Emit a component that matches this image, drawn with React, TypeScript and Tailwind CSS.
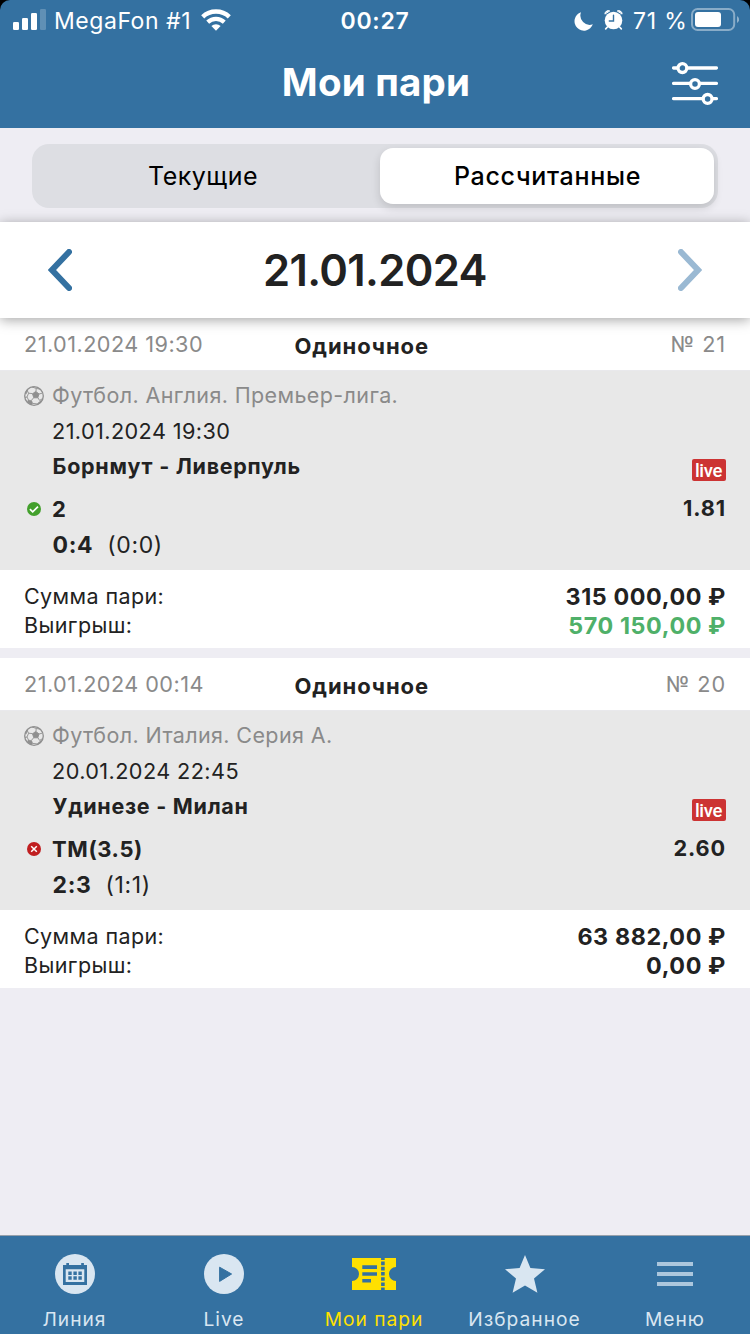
import type { ReactNode } from "react";

type Bet = {
  placed: string;
  number: string;
  league: string;
  start: string;
  match: string;
  won: boolean;
  pick: string;
  odds: string;
  score: string;
  half: string;
  stake: string;
  payout: string;
};

const bets: Bet[] = [
  {
    placed: "21.01.2024 19:30",
    number: "№ 21",
    league: "Футбол. Англия. Премьер-лига.",
    start: "21.01.2024 19:30",
    match: "Борнмут - Ливерпуль",
    won: true,
    pick: "2",
    odds: "1.81",
    score: "0:4",
    half: "(0:0)",
    stake: "315 000,00 ₽",
    payout: "570 150,00 ₽",
  },
  {
    placed: "21.01.2024 00:14",
    number: "№ 20",
    league: "Футбол. Италия. Серия А.",
    start: "20.01.2024 22:45",
    match: "Удинезе - Милан",
    won: false,
    pick: "ТМ(3.5)",
    odds: "2.60",
    score: "2:3",
    half: "(1:1)",
    stake: "63 882,00 ₽",
    payout: "0,00 ₽",
  },
];

function SignalIcon() {
  return (
    <svg width="33" height="21" viewBox="0 0 33 21" fill="#fff">
      <rect x="0" y="13" width="6" height="8" rx="1.3" />
      <rect x="9" y="9" width="6" height="12" rx="1.3" />
      <rect x="18" y="4" width="6" height="17" rx="1.3" />
      <rect x="27" y="0" width="6" height="21" rx="1.3" opacity="0.22" />
    </svg>
  );
}

function WifiIcon() {
  return (
    <svg width="30" height="22" viewBox="-15 -22 30 22" fill="none" stroke="#fff">
      <path d="M-13.3 -14.2A19.5 19.5 0 0 1 13.3 -14.2" strokeWidth="4.5" />
      <path d="M-8.3 -8.9A12.2 12.2 0 0 1 8.3 -8.9" strokeWidth="4.2" />
      <path d="M0 -0.3L-4.6 -4.9A6.6 6.6 0 0 1 4.6 -4.9Z" fill="#fff" stroke="none" />
    </svg>
  );
}

function MoonIcon() {
  return (
    <svg width="19" height="19" viewBox="0 0 19 19" fill="#fff">
      <path d="M7 .3A9.4 9.4 0 1 0 18.8 12.3A9.3 9.3 0 0 1 7 .3Z" />
    </svg>
  );
}

function AlarmIcon() {
  return (
    <svg width="19" height="20" viewBox="0 0 19 20" fill="none" strokeLinecap="round">
      <circle cx="9.5" cy="10.5" r="8.8" fill="#fff" />
      <path d="M.9 3.7A3.2 3.2 0 0 1 5.4 .8ZM18.1 3.7A3.2 3.2 0 0 0 13.6 .8Z" fill="#fff" stroke="#fff" strokeWidth="1" strokeLinejoin="round" />
      <path d="M3.4 17L1.7 18.9M15.6 17L17.3 18.9" stroke="#fff" strokeWidth="1.6" />
      <path d="M9.5 5.3V11H5.3" stroke="#3471a1" strokeWidth="1.4" />
    </svg>
  );
}

function BatteryIcon() {
  return (
    <svg width="48" height="23" viewBox="0 0 48 23" fill="none">
      <rect x="1" y="1" width="42.2" height="21" rx="5.6" stroke="#fff" strokeOpacity="0.42" strokeWidth="2" />
      <rect x="4" y="4" width="26" height="15" rx="3" fill="#fff" />
      <path d="M46 8A4 4 0 0 1 46 15Z" fill="#fff" fillOpacity="0.45" />
    </svg>
  );
}

function FilterIcon() {
  return (
    <svg width="46" height="43" viewBox="0 0 46 43" fill="#3471a1" stroke="#fff" strokeWidth="3.3" strokeLinecap="round">
      <path d="M1.6 6H44.4M1.6 21.4H44.4M1.6 36.7H44.4" />
      <circle cx="10.4" cy="6.1" r="4.4" />
      <circle cx="23" cy="22" r="4.4" />
      <circle cx="35.6" cy="36.9" r="4.4" />
    </svg>
  );
}

function Chevron({ right = false }: { right?: boolean }) {
  return (
    <svg
      width="24"
      height="42"
      viewBox="0 0 24 42"
      fill="none"
      strokeWidth="6"
      strokeLinecap="round"
      strokeLinejoin="miter"
      className={right ? "stroke-[#9ab9d3]" : "stroke-[#3471a1]"}
    >
      <path d={right ? "M3 3L20 21L3 39" : "M21 3L4 21L21 39"} />
    </svg>
  );
}

function BallIcon() {
  return (
    <svg width="20" height="20" viewBox="0 0 20 20" fill="none" stroke="#8f8f8f" strokeWidth="0.9" strokeLinejoin="round">
      <circle cx="10" cy="10" r="9.3" strokeWidth="1.3" />
      <path d="M11.8 5.4L15 7.9L13.8 11.8H9.8L8.5 7.8Z" fill="#8f8f8f" />
      <path d="M12 5.4L12.2 2.4L8 1M12.2 2.4L16.2 3.2M15 8L18.2 7.2M13.8 11.6L15.6 14.4L18.6 12.6M9.8 11.6L7.4 14.4M8.8 17.4L14 18M8.6 7.6L4.6 7.2L3 4.2M4.6 7.2L3 11L.9 11.5M3 11L4.6 14.2" />
      <path d="M4.2 14L7.6 14.6L8.8 17.6L7.2 18.8L3.4 16.2ZM14 17L17 14.6L17.4 15.6L13.6 18.6ZM1.2 7.6L2.8 4.4L3.8 4L2.2 8Z" fill="#8f8f8f" strokeWidth=".5" />
    </svg>
  );
}

function ResultIcon({ won }: { won: boolean }) {
  return (
    <svg width="14" height="14" viewBox="0 0 14 14" fill="none" stroke="#fff" strokeWidth={won ? "1.7" : "1.5"}>
      <circle cx="7" cy="7" r="7" fill={won ? "#43a02c" : "#c01e20"} stroke="none" />
      <path d={won ? "M2.9 7.2L5.7 9.9L11 4.6" : "M4.2 4.2L9.8 9.8M9.8 4.2L4.2 9.8"} />
    </svg>
  );
}

function LineIcon() {
  return (
    <svg width="40" height="40" viewBox="0 0 40 40" fill="#3471a1">
      <circle cx="20" cy="20" r="20" fill="#d9e6f1" />
      <path fillRule="evenodd" d="M8 11H11.3V9H14V11H26.2V9H28.9V11H32V31H8ZM10.7 15.3V28H29.3V15.3Z" />
      <path d="M13.3 17.5H16.7V21H13.3ZM18.4 17.5H21.8V21H18.4ZM23.4 17.5H26.8V21H23.4ZM13.3 22.3H16.7V25.8H13.3ZM18.4 22.3H21.8V25.8H18.4ZM23.4 22.3H26.8V25.8H23.4Z" />
    </svg>
  );
}

function PlayIcon() {
  return (
    <svg width="40" height="40" viewBox="0 0 40 40">
      <circle cx="20" cy="20" r="20" fill="#d9e6f1" />
      <path d="M15.6 13.2L27.6 20L15.6 27.4Z" fill="#3471a1" stroke="#3471a1" strokeWidth="1" strokeLinejoin="round" />
    </svg>
  );
}

function TicketIcon() {
  return (
    <svg width="44" height="32" viewBox="0 0 44 32" fill="#ffe000">
      <path d="M0 0H44V9A7 7 0 0 0 44 23V32H0V23A7 7 0 0 0 0 9Z" />
      <path d="M10.3 7.3H25V11H10.3ZM10.3 14.2H25V17.8H10.3ZM10.3 21H19V24.6H10.3Z" fill="#3471a1" />
      <path d="M30.9 0V32" stroke="#3471a1" strokeWidth="3.6" strokeDasharray="3.6 1.6" strokeDashoffset="1.6" />
    </svg>
  );
}

function StarIcon() {
  return (
    <svg width="40" height="38" viewBox="0 0 40 38" fill="#d9e6f1">
      <path d="M20 0L25.4 12.9L40 14.2L29 23.6L32.4 37.8L20 30.6L7.6 37.8L11 23.6L0 14.2L14.6 12.9Z" />
    </svg>
  );
}

function MenuIcon() {
  return (
    <svg width="36" height="24" viewBox="0 0 36 24" fill="#acc7dd">
      <path d="M0 0H36V4H0ZM0 10H36V14H0ZM0 20H36V24H0Z" />
    </svg>
  );
}

function BetCard({ bet }: { bet: Bet }) {
  return (
    <article className="bg-white text-[#222]">
      <header className="flex h-[52px] items-center px-6 text-[21.7px] text-[#8a8a8a]">
        <span className="w-[270.5px] tracking-[0.44px]">{bet.placed}</span>
        <span className="pt-1 text-[22px] font-bold tracking-[0.92px] text-[#222]">Одиночное</span>
        <span className="ml-auto tracking-[0.9px]">{bet.number}</span>
      </header>

      <div className="h-[200px] border-t border-[#e9e9ec] bg-[#e8e8e8] px-6 pt-[7px]">
        <div className="flex h-9 items-center text-[21.5px] tracking-[0.38px] text-[#8a8a8a]">
          <span className="w-7"><BallIcon /></span>
          <span className="pb-0.5">{bet.league}</span>
        </div>
        <div className="flex h-[35px] items-center pl-7 text-[21.7px] tracking-[0.4px]">{bet.start}</div>
        <div className="mb-[7px] flex h-[35px] items-center justify-between pl-[28.5px]">
          <span className="text-[21.5px] font-bold tracking-[0.72px]">{bet.match}</span>
          <span className="mt-[7px] flex h-[22px] w-[34px] items-center justify-center rounded-[2px] bg-[#cc3333] pt-[3px] pr-px font-[Roboto,sans-serif] text-[18.5px] font-medium tracking-[-0.3px] text-white">
            live
          </span>
        </div>
        <div className="flex h-9 items-center text-[22px] font-bold">
          <span className="w-7 pl-[3px]"><ResultIcon won={bet.won} /></span>
          <span className="flex-1 tracking-[0.6px]">{bet.pick}</span>
          <span className="pb-0.5 text-[21.7px] tracking-[0.9px]">{bet.odds}</span>
        </div>
        <div className="flex h-9 items-center gap-[14px] pl-[28.5px] text-[23px]">
          <span className="font-bold tracking-[0.65px]">{bet.score}</span>
          <span className="tracking-[0.65px]">{bet.half}</span>
        </div>
      </div>

      <footer className="h-[78px] px-6 pt-3">
        <div className="flex h-[29px] items-center justify-between text-[21.5px] tracking-[0.4px]">
          <span>Сумма пари:</span>
          <span className="pt-0.5 text-[23.3px] font-bold tracking-[0.6px]">{bet.stake}</span>
        </div>
        <div className="flex h-[29px] items-center justify-between text-[21.5px] tracking-[0.4px]">
          <span>Выигрыш:</span>
          <span className={`pt-0.5 text-[23.3px] font-bold tracking-[0.6px] ${bet.won ? "text-[#4fb069]" : ""}`}>{bet.payout}</span>
        </div>
      </footer>
    </article>
  );
}

function NavItem({ icon, label, active = false }: { icon: ReactNode; label: string; active?: boolean }) {
  return (
    <a className={`flex flex-col items-center ${active ? "text-[#ffe000]" : "text-[#d9e6f1]"}`}>
      <span className="flex h-[76px] items-center">{icon}</span>
      <span className="-mt-[3px] h-5 text-[19.2px] leading-5 tracking-[1px]">{label}</span>
    </a>
  );
}

export default function App() {
  return (
    <div className="flex h-[1334px] w-[750px] flex-col overflow-hidden bg-black font-[Inter,sans-serif] whitespace-nowrap">
      <header className="h-32 shrink-0 rounded-t-[10px] bg-[#3471a1] text-white">
        <div className="grid h-[41px] grid-cols-[1fr_auto_1fr] items-center text-[23px]">
          <div className="flex items-center pl-[13px]">
            <span className="-mt-0.5"><SignalIcon /></span>
            <span className="ml-2 w-[147px] pt-0.5 tracking-[0.55px]">MegaFon #1</span>
            <span className="-mt-px"><WifiIcon /></span>
          </div>
          <span className="pt-0.5 font-semibold tracking-[0.7px]">00:27</span>
          <div className="flex items-center justify-end pr-[11px]">
            <span className="mt-px"><MoonIcon /></span>
            <span className="ml-[11px] -mt-px"><AlarmIcon /></span>
            <span className="mr-0.5 ml-[10px] w-[56px] pt-0.5 tracking-[0.8px]">71 %</span>
            <span className="-mt-0.5"><BatteryIcon /></span>
          </div>
        </div>
        <div className="grid h-[82px] grid-cols-[1fr_auto_1fr] items-center">
          <h1 className="col-start-2 pt-0.5 pl-0.5 text-[38.5px] font-bold tracking-[0.2px]">Мои пари</h1>
          <span className="justify-self-end pt-[3px] pr-8"><FilterIcon /></span>
        </div>
      </header>

      <main className="flex-1 bg-[#eeedf3]">
        <div className="h-[94px] px-8 pt-4">
          <div className="grid h-16 grid-cols-2 gap-[10px] rounded-[17px] bg-[#dddee3] p-1 text-[25px] text-black">
            <button className="pt-0.5 tracking-[0.48px]">Текущие</button>
            <button className="rounded-[13px] bg-white pt-0.5 pl-px font-medium tracking-[0.7px] shadow-[0_4px_10px_rgba(0,0,0,0.14)]">
              Рассчитанные
            </button>
          </div>
        </div>

        <div className="relative flex h-24 items-center justify-between bg-white px-12 shadow-[0_2px_12px_rgba(0,0,0,0.36)]">
          <Chevron />
          <span className="pt-0.5 text-[43.5px] font-semibold tracking-[-0.65px] text-[#222]">21.01.2024</span>
          <Chevron right />
        </div>

        <div className="flex flex-col gap-[10px]">
          {bets.map((bet) => (
            <BetCard key={bet.number} bet={bet} />
          ))}
        </div>
      </main>

      <nav className="grid h-[99px] shrink-0 grid-cols-[149px_150px_150px_151px_150px] border-t border-[#96a0ab] bg-[#3471a1]">
        <NavItem icon={<LineIcon />} label="Линия" />
        <NavItem icon={<PlayIcon />} label="Live" />
        <NavItem icon={<TicketIcon />} label="Мои пари" active />
        <NavItem icon={<StarIcon />} label="Избранное" />
        <NavItem icon={<MenuIcon />} label="Меню" />
      </nav>
    </div>
  );
}
